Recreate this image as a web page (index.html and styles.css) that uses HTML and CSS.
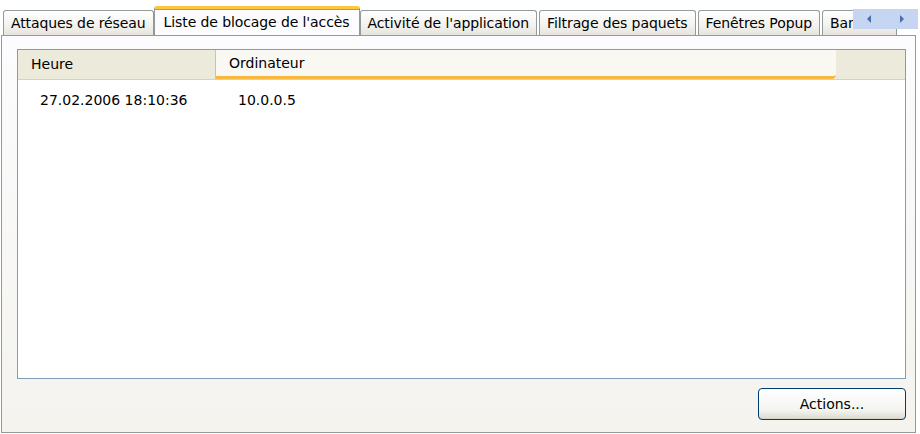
FILE: index.html
```html
<!DOCTYPE html>
<html lang="fr">
<head>
    <meta charset="UTF-8">
    <title>Liste de blocage de l'accès</title>
    <link rel="stylesheet" href="styles.css">
</head>
<body>
    <div class="window">
        <!-- onglets -->
        <nav class="tabs">
            <div class="tab">Attaques de réseau</div>
            <div class="tab tab-active">Liste de blocage de l'accès</div>
            <div class="tab">Activité de l'application</div>
            <div class="tab">Filtrage des paquets</div>
            <div class="tab">Fenêtres Popup</div>
            <div class="tab tab-cut">Band</div>
            <div class="tab-arrows">
                <svg class="arrow" width="8" height="10" viewBox="0 0 8 10"><path d="M6 1 L2 5 L6 9 Z" fill="#4a6ea9"/></svg>
                <svg class="arrow" width="8" height="10" viewBox="0 0 8 10"><path d="M2 1 L6 5 L2 9 Z" fill="#4a6ea9"/></svg>
            </div>
        </nav>

        <section class="panel">
            <div class="listview">
                <div class="list-header">
                    <div class="col col-time">Heure</div>
                    <div class="col col-host">Ordinateur</div>
                    <div class="col col-rest"></div>
                </div>
                <div class="list-row">
                    <div class="cell cell-time">27.02.2006 18:10:36</div>
                    <div class="cell cell-host">10.0.0.5</div>
                </div>
            </div>
            <div class="panel-footer">
                <button class="button-actions">Actions...</button>
            </div>
        </section>
    </div>
</body>
</html>
```

FILE: styles.css
```css
body {
    margin: 0;
    background: #ffffff;
    font-family: "DejaVu Sans", "Liberation Sans", sans-serif;
    font-size: 14px;
    color: #000;
}

.window {
    width: 920px;
    height: 434px;
    display: flex;
    flex-direction: column;
}

/* onglets */
.tabs {
    display: flex;
    align-items: flex-end;
    height: 35px;
    padding-left: 3px;
    position: relative;
    z-index: 2;
    overflow: hidden;
    letter-spacing: -0.1px;
}

.tab {
    height: 25px;
    line-height: 24px;
    padding: 0 7px;
    margin-right: 2px;
    border: 1px solid #919b9c;
    border-bottom: none;
    border-radius: 3px 3px 0 0;
    background: linear-gradient(#ffffff, #f3f2ee 60%, #e6e4dc);
    white-space: nowrap;
    box-sizing: border-box;
    flex-shrink: 0;
}

.tab-active {
    height: 30px;
    line-height: 26px;
    margin: 0 0 -1px -2px;
    padding: 0 9px;
    background: #fcfcfe;
    border-top: 3px solid #ffc83c;
    box-shadow: inset 0 1px 0 #e68b2c;
    position: relative;
}

.tab-cut {
    padding-right: 30px;
}

.tab-arrows {
    position: absolute;
    left: 853px;
    top: 9px;
    width: 65px;
    height: 20px;
    background: #c6d6f2;
    display: flex;
    align-items: center;
    justify-content: space-around;
}

/* page de l'onglet */
.panel {
    flex: 1;
    margin: 0 4px 1px 1px;
    border: 1px solid #919b9c;
    background: linear-gradient(#fcfcfe, #f4f3ee);
    display: flex;
    flex-direction: column;
    padding: 13px 9px 0 15px;
}

.listview {
    flex: 1;
    border: 1px solid #7f9db9;
    background: #ffffff;
}

.list-header {
    display: flex;
    height: 29px;
    border-bottom: 1px solid #d6d2c2;
}

.col {
    line-height: 29px;
    padding-left: 13px;
    box-sizing: border-box;
}

.col-time {
    width: 198px;
    background: #ebeadb;
    border-right: 1px solid #c7c5b2;
}

.col-host {
    width: 620px;
    background: #f9f8f3;
    border-bottom: 3px solid #f6b83e;
    line-height: 27px;
    border-bottom-right-radius: 4px;
}

.col-rest {
    flex: 1;
    background: #ebeadb;
}

.list-row {
    display: flex;
    height: 40px;
    align-items: center;
}

.cell-time {
    width: 198px;
    padding-left: 22px;
    box-sizing: border-box;
}

.cell-host {
    padding-left: 22px;
}

.panel-footer {
    display: flex;
    justify-content: flex-end;
    padding: 9px 0 12px;
}

.button-actions {
    width: 148px;
    height: 32px;
    font-family: inherit;
    font-size: 14px;
    color: #000;
    border: 1px solid #003c74;
    border-radius: 4px;
    background: linear-gradient(#ffffff, #f4f4f0 70%, #dcdad0);
    box-shadow: inset 0 -1px 0 #d6d0c5;
    cursor: pointer;
}
```
